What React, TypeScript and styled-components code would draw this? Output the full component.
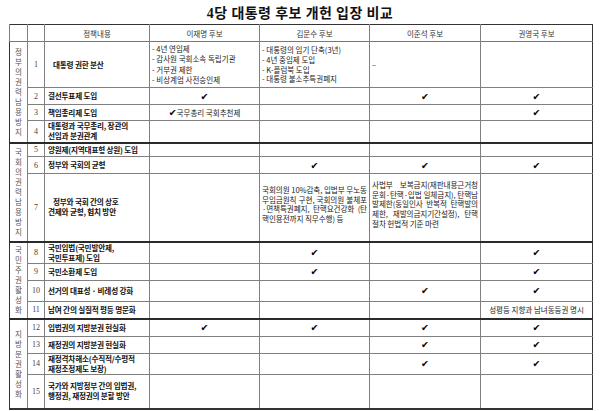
import React from "react";
import styled, { createGlobalStyle } from "styled-components";

const GlobalStyle = createGlobalStyle`
  html, body {
    margin: 0;
    padding: 0;
    background: #fff;
  }
  body {
    font-family: "Liberation Serif", "Noto Sans CJK KR", serif;
    color: #222;
  }
`;

const Page = styled.div`
  width: 600px;
  height: 411px;
  overflow: hidden;
`;

const Title = styled.h1`
  margin: 0;
  height: 24px;
  display: flex;
  align-items: flex-end;
  justify-content: center;
  padding-bottom: 3px;
  box-sizing: border-box;
  font-family: "Liberation Serif", "Noto Sans CJK KR", serif;
  font-size: 14px;
  font-weight: 700;
  line-height: 1;
  color: #111;
  letter-spacing: 0.4px;
`;

const Table = styled.table`
  margin-left: 9px;
  width: 583px;
  border-collapse: collapse;
  table-layout: fixed;
  border-top: 1px solid #333;
  border-left: 1.5px solid #333;
  border-right: 1.5px solid #333;
  border-bottom: 2px solid #333;
`;

const Col = styled.col<{ $w: number }>`
  width: ${(p) => p.$w}px;
`;

const Row = styled.tr<{ $h: number; $group?: boolean }>`
  height: ${(p) => p.$h}px;
  border-top: ${(p) => (p.$group ? "2px solid #2a2a2a" : "1px solid #808080")};
`;

const HeadRow = styled.tr`
  height: 17px;
  border-bottom: 1.5px solid #777;
`;

const HeadCell = styled.th`
  padding: 0;
  border-left: 1.5px solid #808080;
  font-family: "Noto Sans CJK KR", sans-serif;
  font-size: 7.5px;
  font-weight: 400;
  color: #333;
  text-align: center;
  vertical-align: middle;
`;

const Cell = styled.td<{ $align?: "left" | "center" }>`
  padding: 0 2px;
  border-left: 1.5px solid #808080;
  font-family: "Noto Sans CJK KR", sans-serif;
  font-size: 7.5px;
  color: #222;
  text-align: ${(p) => p.$align || "center"};
  vertical-align: middle;
  overflow: hidden;
`;

const CategoryCell = styled.td`
  padding: 0;
  vertical-align: middle;
`;

const VerticalLabel = styled.div`
  display: flex;
  flex-direction: column;
  align-items: center;
  font-family: "Noto Sans CJK KR", sans-serif;
  font-size: 7.5px;
  line-height: 10px;
  color: #555;
`;

const NumCell = styled.td`
  padding: 0;
  border-left: 1.5px solid #808080;
  font-family: "Liberation Serif", serif;
  font-size: 8px;
  color: #444;
  text-align: center;
  vertical-align: middle;
`;

const PolicyCell = styled.td`
  padding: 0 2px 0 3px;
  border-left: 1.5px solid #808080;
  font-family: "Noto Sans CJK KR", sans-serif;
  font-size: 7.6px;
  font-weight: 700;
  line-height: 10px;
  letter-spacing: -0.2px;
  color: #111;
  text-align: left;
  vertical-align: middle;
`;

const Indent = styled.span<{ $w: number }>`
  display: inline-block;
  width: ${(p) => p.$w}px;
`;

const Check = styled.span`
  font-family: "DejaVu Sans", sans-serif;
  font-size: 9.5px;
  line-height: 1;
  color: #000;
`;

const Lines = styled.div<{ $lh: number }>`
  text-align: left;
  line-height: ${(p) => p.$lh}px;
  white-space: nowrap;
`;

const Para = styled.div`
  padding-bottom: 6px;
  text-align: justify;
  text-align-last: left;
  line-height: 9.6px;
  font-size: 7.6px;
  letter-spacing: -0.1px;
  word-break: break-all;
`;

type CellData =
  | null
  | "v"
  | { lines: string[]; lh: number }
  | { para: string }
  | { text: string; check?: boolean };

type RowData = {
  no: number;
  h: number;
  policy: string[];
  indent?: number;
  cells: CellData[];
};

type Group = { label: string; rows: RowData[] };

const groups: Group[] = [
  {
    label: "정부의권력남용방지",
    rows: [
      {
        no: 1,
        h: 46,
        policy: ["대통령 권한 분산"],
        indent: 5,
        cells: [
          {
            lines: [
              "- 4년 연임제",
              "- 감사원 국회소속 독립기관",
              "- 거부권 제한",
              "- 비상계엄 사전승인제",
            ],
            lh: 10.5,
          },
          {
            lines: [
              "-  대통령의 임기 단축(3년)",
              "-  4년 중임제 도입",
              "-  K-플럼북 도입",
              "- 대통령 불소추특권폐지",
            ],
            lh: 9.6,
          },
          { lines: ["–"], lh: 10 },
          null,
        ],
      },
      { no: 2, h: 17, policy: ["결선투표제 도입"], cells: ["v", null, "v", "v"] },
      {
        no: 3,
        h: 16,
        policy: ["책임총리제 도입"],
        cells: [{ text: "국무총리 국회추천제", check: true }, null, null, "v"],
      },
      {
        no: 4,
        h: 22,
        policy: ["대통령과 국무총리, 장관의", "선임과 분권관계"],
        cells: [null, null, null, null],
      },
    ],
  },
  {
    label: "국회의권력남용방지",
    rows: [
      {
        no: 5,
        h: 14,
        policy: ["양원제(지역대표형 상원) 도입"],
        cells: [null, null, null, null],
      },
      { no: 6, h: 17, policy: ["정부와 국회의 균형"], cells: [null, "v", "v", "v"] },
      {
        no: 7,
        h: 68,
        policy: ["정부와 국회 간의 상호", "견제와 균형, 협치 방안"],
        indent: 5,
        cells: [
          null,
          {
            para:
              "국회의원 10%감축, 입법부 무노동 무임금원칙 구현, 국회의원 불체포·면책특권폐지, 탄핵요건강화 (탄핵인용전까지 직무수행) 등",
          },
          {
            para:
              "사법부 보복금지(재판내용근거청문회·탄핵·입법 일체금지), 탄핵남발제한(동일인사 반복적 탄핵발의 제한, 재발의금지기간설정), 탄핵절차 헌법적 기준 마련",
          },
          null,
        ],
      },
    ],
  },
  {
    label: "국민주권활성화",
    rows: [
      {
        no: 8,
        h: 21,
        policy: ["국민입법(국민발안제,", "국민투표제) 도입"],
        cells: [null, "v", null, "v"],
      },
      { no: 9, h: 17, policy: ["국민소환제 도입"], cells: [null, "v", null, "v"] },
      {
        no: 10,
        h: 21,
        policy: ["선거의 대표성 · 비례성 강화"],
        cells: [null, null, "v", "v"],
      },
      {
        no: 11,
        h: 18,
        policy: ["남여 간의 실질적 평등 명문화"],
        cells: [null, null, null, { text: "성평등 지향과 남녀동등권 명시" }],
      },
    ],
  },
  {
    label: "지방분권활성화",
    rows: [
      {
        no: 12,
        h: 17,
        policy: ["입법권의 지방분권 현실화"],
        cells: ["v", "v", "v", "v"],
      },
      {
        no: 13,
        h: 17,
        policy: ["재정권의 지방분권 현실화"],
        cells: [null, null, "v", "v"],
      },
      {
        no: 14,
        h: 21,
        policy: ["재정격차해소(수직적/수평적", "재정조정제도 보장)"],
        cells: [null, null, "v", "v"],
      },
      {
        no: 15,
        h: 35,
        policy: ["국가와 지방정부 간의 입법권,", "행정권, 재정권의 분할 방안"],
        cells: [null, null, null, null],
      },
    ],
  },
];

const candidates = ["이재명 후보", "김문수 후보", "이준석 후보", "권영국 후보"];

function renderCell(c: CellData) {
  if (c === null) return null;
  if (c === "v") return <Check>✔</Check>;
  if ("lines" in c)
    return (
      <Lines $lh={c.lh}>
        {c.lines.map((l, i) => (
          <div key={i}>{l}</div>
        ))}
      </Lines>
    );
  if ("para" in c) return <Para>{c.para}</Para>;
  return (
    <>
      {c.check && <Check>✔</Check>}
      {c.text}
    </>
  );
}

export default function App() {
  return (
    <Page>
      <GlobalStyle />
      <Title>4당 대통령 후보 개헌 입장 비교</Title>
      <Table>
        <colgroup>
          <Col $w={18} />
          <Col $w={17} />
          <Col $w={105} />
          <Col $w={110} />
          <Col $w={110} />
          <Col $w={111} />
          <Col $w={112} />
        </colgroup>
        <thead>
          <HeadRow>
            <HeadCell />
            <HeadCell />
            <HeadCell>정책내용</HeadCell>
            {candidates.map((n) => (
              <HeadCell key={n}>{n}</HeadCell>
            ))}
          </HeadRow>
        </thead>
        <tbody>
          {groups.map((g) =>
            g.rows.map((r, i) => (
              <Row key={r.no} $h={r.h} $group={i === 0 && r.no !== 1}>
                {i === 0 && (
                  <CategoryCell rowSpan={g.rows.length}>
                    <VerticalLabel>
                      {g.label.split("").map((ch, k) => (
                        <span key={k}>{ch}</span>
                      ))}
                    </VerticalLabel>
                  </CategoryCell>
                )}
                <NumCell>{r.no}</NumCell>
                <PolicyCell>
                  {r.policy.map((line, k) => (
                    <div key={k}>
                      {k === 0 && r.indent ? <Indent $w={r.indent} /> : null}
                      {line}
                    </div>
                  ))}
                </PolicyCell>
                {r.cells.map((c, k) => (
                  <Cell
                    key={k}
                    $align={c && typeof c === "object" && "lines" in c ? "left" : "center"}
                  >
                    {renderCell(c)}
                  </Cell>
                ))}
              </Row>
            ))
          )}
        </tbody>
      </Table>
    </Page>
  );
}
